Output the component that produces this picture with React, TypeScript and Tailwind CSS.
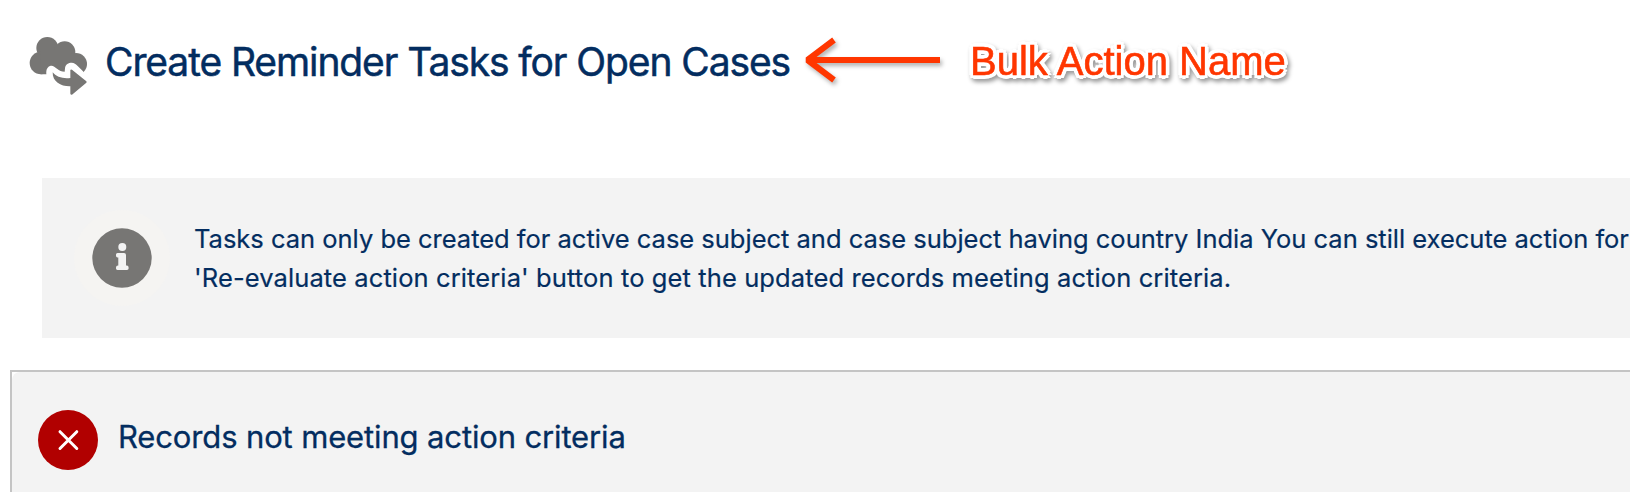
function CloudForwardIcon() {
  return (
    <svg viewBox="0 0 240 210" className="h-[70px] w-20 shrink-0" aria-hidden="true">
      <g fill="#777674">
        <circle cx="82" cy="54" r="33" />
        <circle cx="134" cy="66" r="32" />
        <circle cx="63" cy="99" r="34" />
        <circle cx="168" cy="102" r="33" />
        <path d="M60 60h90l25 40-15 33H62z" />
      </g>
      <path
        d="M80 138C77 123 80 112 90 108C98 105 104 111 111 116C118 122 125 124 134 125L135 115C136 103 146 98 155 98C162 98 168 102 173 108L189 124L206 150V206H80Z"
        fill="white"
      />
      <path
        d="M98 127C108 141 130 147 151 144V120Q152 117 156 119L199 154Q201 156 199 158L156 194Q152 195 151 191V169C124 170 97 156 98 127Z"
        fill="#777674"
      />
    </svg>
  );
}

function Arrow() {
  return (
    <svg
      viewBox="0 0 144 60"
      className="h-[60px] w-36 shrink-0 drop-shadow-[2px_3px_2px_rgba(0,0,0,0.3)]"
      fill="none"
      stroke="#ff3600"
      strokeWidth="6"
      strokeLinejoin="bevel"
      aria-hidden="true"
    >
      <path d="M141 30H9" />
      <path d="M35 10L8.5 30L35 50" />
    </svg>
  );
}

function InfoIcon() {
  return (
    <div className="flex size-24 shrink-0 items-center justify-center rounded-full bg-[#f5f4f2]">
      <svg viewBox="0 0 60 60" className="size-[60px]" aria-hidden="true">
        <circle cx="30" cy="30" r="29.7" fill="#777674" />
        <circle cx="30.3" cy="19" r="4" fill="#f3f3f3" />
        <path
          d="M25.5 25H32Q34 25 34 27V37.5H34.8Q36.6 37.5 36.6 39.5V40.6Q36.6 42 35 42H25.4Q24 42 24 40.6V39.5Q24 37.5 26 37.5H26.3V29.5H25.5Q24 29.3 24 27.7V26.5Q24 25 25.5 25Z"
          fill="#f3f3f3"
        />
      </svg>
    </div>
  );
}

function ErrorIcon() {
  return (
    <svg viewBox="0 0 60 60" className="size-[60px] shrink-0" aria-hidden="true">
      <circle cx="30" cy="30" r="30" fill="#b10000" />
      <path d="M22 21.7L38.8 38.5M38.8 21.7L22 38.5" stroke="white" strokeWidth="3" strokeLinecap="round" />
    </svg>
  );
}

export default function App() {
  return (
    <div className="flex h-[492px] w-full flex-col overflow-hidden bg-white font-[Inter,sans-serif] whitespace-nowrap text-[#032d60]">
      <header className="flex h-[178px] items-start pt-[30px] pl-5">
        <CloudForwardIcon />
        <h1 className="ml-[5px] w-[687px] pt-[2px] text-[39px] leading-[60px] tracking-[-1.1px] [-webkit-text-stroke:0.5px_#032d60]">
          Create Reminder Tasks for Open Cases
        </h1>
        <div className="ml-[7px]">
          <Arrow />
        </div>
        <span className="ml-[27px] font-['Liberation_Sans',sans-serif] text-[40px] leading-[62px] text-[#ff3600] [-webkit-text-stroke:0.6px_#ff3600] drop-shadow-[2px_3px_2px_rgba(0,0,0,0.4)] [text-shadow:4px_0_0_#fff,-4px_0_0_#fff,0_4px_0_#fff,0_-4px_0_#fff,3px_3px_0_#fff,-3px_3px_0_#fff,3px_-3px_0_#fff,-3px_-3px_0_#fff,2px_0_0_#fff,-2px_0_0_#fff,0_2px_0_#fff,0_-2px_0_#fff]">
          Bulk Action Name
        </span>
      </header>

      <section className="ml-[42px] flex h-40 shrink-0 items-start bg-[#f3f3f3] pt-8 pl-8">
        <InfoIcon />
        <p className="ml-6 pt-[9px] text-[25.5px] leading-[39px] [-webkit-text-stroke:0.2px_#032d60]">
          <span className="tracking-[-0.01px]">
            Tasks can only be created for active case subject and case subject having country India You can still execute action for
          </span>
          <br />
          <span className="tracking-[0.11px]">
            &#39;Re-evaluate action criteria&#39; button to get the updated records meeting action criteria.
          </span>
        </p>
      </section>

      <section className="mt-8 ml-[10px] flex-1 border-t-2 border-l-2 border-[#c4c4c4] bg-white">
        <div className="flex h-full items-start rounded-tl-lg bg-[#f3f3f3] pt-[38px] pl-[26px]">
          <ErrorIcon />
          <h2 className="ml-5 text-[31px] leading-[54px] tracking-[-0.14px] [-webkit-text-stroke:0.3px_#032d60]">
            Records not meeting action criteria
          </h2>
        </div>
      </section>
    </div>
  );
}
